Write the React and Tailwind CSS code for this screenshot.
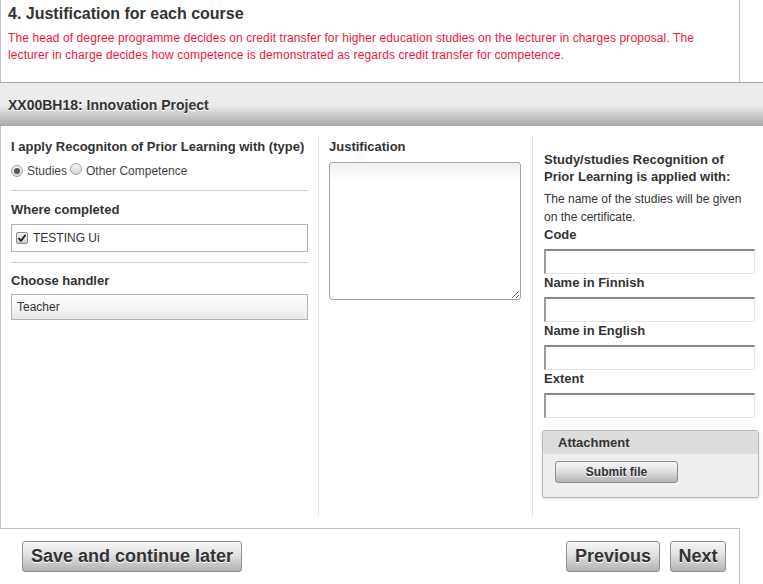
import React from "react";

const font = { fontFamily: '"Liberation Sans", Arial, sans-serif' };

function Radio({ checked }) {
  return (
    <span className="inline-flex items-center justify-center w-[12px] h-[12px] rounded-full border border-[#a3a3a3] bg-[linear-gradient(#f4f4f4,#d6d6d6)]">
      {checked && <span className="w-[6px] h-[6px] rounded-full bg-[#555]" />}
    </span>
  );
}

function Field({ label }) {
  return (
    <div>
      <div className="text-[13px] leading-[16px] font-bold text-[#333]">{label}</div>
      <div className="mt-[6px] mb-[1px] h-[25px] border border-[#e4e4e4] border-t-2 border-t-[#8a8a8a] border-l-2 border-l-[#9a9a9a] bg-white" />
    </div>
  );
}

function GrayButton({ children, className }) {
  return (
    <button
      className={
        "rounded-[3px] border border-[#8f8f8f] bg-[linear-gradient(#f6f6f6,#e4e4e4_40%,#b3b3b3)] font-bold text-[#333] [text-shadow:0_1px_0_#fff] " +
        className
      }
    >
      {children}
    </button>
  );
}

export default function App() {
  return (
    <div className="w-[763px] h-[584px] overflow-hidden bg-white" style={font}>
      {/* Intro */}
      <div className="w-[740px] border-x border-[#c4c4c4] pl-[7px] pr-[30px] pt-[4px] pb-[18px]">
        <h1 className="text-[16px] leading-[20px] font-bold text-[#333]">
          4. Justification for each course
        </h1>
        <p className="mt-[6px] text-[12px] leading-[17px] tracking-[0.1px] text-[#f0173c]">
          The head of degree programme decides on credit transfer for higher education studies on the lecturer in charges proposal. The
          lecturer in charge decides how competence is demonstrated as regards credit transfer for competence.
        </p>
      </div>

      {/* Course header */}
      <div className="h-[44px] border-t border-[#a8a8a8] bg-[linear-gradient(#ededed_0%,#ececec_50%,#a8a8a8_100%)] px-[8px] flex items-center">
        <span className="text-[14px] font-bold text-[#333] [text-shadow:0_1px_0_#fff] pt-[1px]">
          XX00BH18: Innovation Project
        </span>
      </div>

      {/* Columns */}
      <div className="flex h-[402px] border-l border-[#c4c4c4]">
        <div className="w-[318px] shrink-0 mt-[9px] mb-[12px] pl-[10px] pr-[10px] border-r border-[#e2e2e2]">
          <div className="pt-[4px] text-[13px] leading-[16px] font-bold text-[#333] whitespace-nowrap">
            I apply Recogniton of Prior Learning with (type)
          </div>
          <div className="mt-[8px] flex items-center text-[12px] leading-[16px] text-[#444]">
            <Radio checked />
            <span className="ml-[4px]">Studies</span>
            <span className="ml-[3px]">
              <Radio />
            </span>
            <span className="ml-[4px]">Other Competence</span>
          </div>
          <div className="mt-[11px] border-t border-[#cfcfcf]" />
          <div className="mt-[11px] text-[13px] leading-[16px] font-bold text-[#333]">Where completed</div>
          <div className="mt-[6px] h-[28px] border border-[#b4b4b4] flex items-center px-[4px] text-[12px] text-[#333]">
            <span className="w-[12px] h-[12px] rounded-[2px] border border-[#8c8c8c] bg-[linear-gradient(#f4f4f4,#cfcfcf)] flex items-center justify-center">
              <svg width="10" height="10" viewBox="0 0 10 10">
                <path d="M1.5 5.2 L4 7.8 L8.6 1.8" fill="none" stroke="#222" strokeWidth="1.8" />
              </svg>
            </span>
            <span className="ml-[5px]">TESTING Ui</span>
          </div>
          <div className="mt-[10px] border-t border-[#cfcfcf]" />
          <div className="mt-[10px] text-[13px] leading-[16px] font-bold text-[#333]">Choose handler</div>
          <div className="mt-[5px] h-[26px] border border-[#b4b4b4] bg-[linear-gradient(#fdfdfd,#f4f4f4_60%,#e6e6e6)] flex items-center px-[5px] text-[12px] text-[#333]">
            Teacher
          </div>
        </div>

        <div className="w-[214px] shrink-0 mt-[9px] mb-[12px] pl-[10px] pr-[11px] border-r border-[#e2e2e2]">
          <div className="pt-[4px] text-[13px] leading-[16px] font-bold text-[#333]">Justification</div>
          <textarea className="mt-[7px] block w-[192px] h-[138px] rounded-[3px] border border-[#a4a4a4] bg-[linear-gradient(#f0f0f0,#ffffff_20px)] outline-none" />
        </div>

        <div className="flex-1 min-w-0 mt-[9px] pl-[11px] pr-[8px]">
          <div className="pt-[16px] text-[13px] leading-[17px] font-bold text-[#333]">
            Study/studies Recognition of
            <br />
            Prior Learning is applied with:
          </div>
          <div className="mt-[5px] mb-[1px] text-[12px] leading-[18px] text-[#333]">
            The name of the studies will be given
            <br />
            on the certificate.
          </div>
          <Field label="Code" />
          <Field label="Name in Finnish" />
          <Field label="Name in English" />
          <Field label="Extent" />
          <div className="mt-[12px] -ml-[2px] w-[217px] h-[68px] rounded-[3px] border border-[#b8b8b8] bg-[#eeeeee] shadow-[0_1px_3px_rgba(0,0,0,0.15)] overflow-hidden">
            <div className="h-[23px] bg-[#dcdcdc] px-[15px] flex items-center text-[13px] font-bold text-[#333]">
              Attachment
            </div>
            <div className="pl-[12px] pt-[5px]">
              <GrayButton className="w-[123px] h-[22px] text-[12px]">Submit file</GrayButton>
            </div>
          </div>
        </div>
      </div>

      {/* Footer */}
      <div className="w-[740px] h-[60px] border-t border-r border-[#c4c4c4] flex items-start pt-[12px] pl-[22px] pr-[13px]">
        <GrayButton className="w-[220px] h-[31px] text-[18px]">Save and continue later</GrayButton>
        <div className="ml-auto flex gap-[10px]">
          <GrayButton className="w-[94px] h-[31px] text-[18px]">Previous</GrayButton>
          <GrayButton className="w-[56px] h-[31px] text-[18px]">Next</GrayButton>
        </div>
      </div>
    </div>
  );
}
